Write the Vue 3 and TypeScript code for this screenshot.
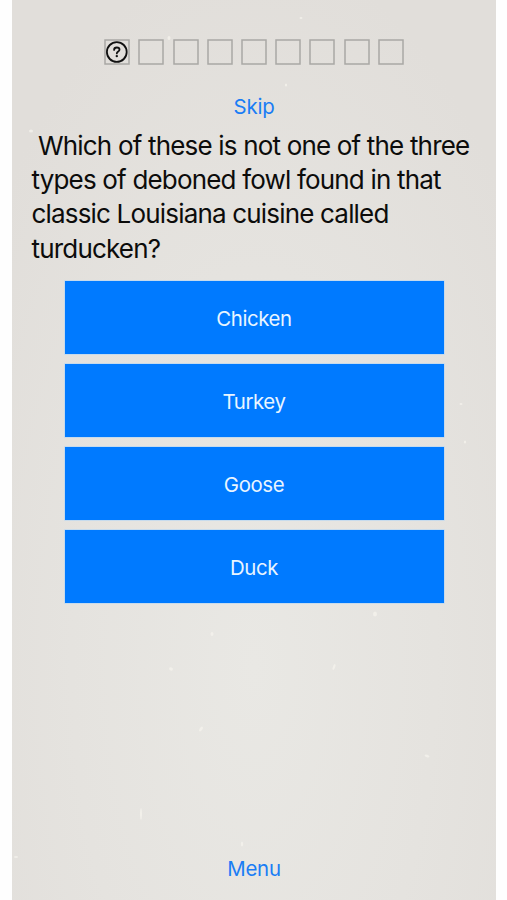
<script setup lang="ts">
import { ref } from 'vue'

interface Speck { x: number; y: number; rx: number; ry: number; tilt: number }

const slots = Array.from({ length: 9 }, (_, i) => i)
const current = ref(0)
const questionLines = [
  '\u00a0Which of these is not one of the three',
  'types of deboned fowl found in that',
  'classic Louisiana cuisine called',
  'turducken?',
]
const answers = ['Chicken', 'Turkey', 'Goose', 'Duck']
const selected = ref<string | null>(null)

// Pale flecks in the paper backdrop
const specks: Speck[] = [
  { x: 157, y: 38, rx: 1.5, ry: 2, tilt: 0 },
  { x: 289, y: 18, rx: 1.5, ry: 1, tilt: 0 },
  { x: 274, y: 85, rx: 1.2, ry: 1.5, tilt: 0 },
  { x: 19, y: 131, rx: 2, ry: 1.5, tilt: 0 },
  { x: 449, y: 404, rx: 1.5, ry: 1, tilt: 0 },
  { x: 453, y: 442, rx: 1.2, ry: 1.5, tilt: 0 },
  { x: 363, y: 614, rx: 2, ry: 2.5, tilt: 0 },
  { x: 200, y: 634, rx: 1.5, ry: 2, tilt: 0 },
  { x: 159, y: 669, rx: 2, ry: 1.5, tilt: 20 },
  { x: 322, y: 667, rx: 1.2, ry: 3.2, tilt: 18 },
  { x: 189, y: 729, rx: 1.4, ry: 2.8, tilt: 35 },
  { x: 415, y: 756, rx: 2.5, ry: 1.2, tilt: 20 },
  { x: 129, y: 814, rx: 1, ry: 6, tilt: 0 },
  { x: 230, y: 844, rx: 1.2, ry: 2.5, tilt: 0 },
  { x: 4, y: 857, rx: 2, ry: 1, tilt: 0 },
]
</script>

<template>
  <main class="screen">
    <svg class="specks" viewBox="0 0 485 900" aria-hidden="true">
      <ellipse
        v-for="(s, i) in specks" :key="i"
        :cx="s.x" :cy="s.y" :rx="s.rx" :ry="s.ry"
        :transform="`rotate(${s.tilt} ${s.x} ${s.y})`"
      />
    </svg>
    <div class="slots">
      <svg v-for="n in slots" :key="n" class="slot" viewBox="0 0 26 26">
        <rect class="frame" x="1" y="1" width="24" height="24" />
        <g v-if="n === current" class="mark">
          <circle cx="12.8" cy="13" r="9.9" />
          <path d="M10.1 10.9C10.1 9.3 11.2 8.5 12.8 8.5C14.4 8.5 15.5 9.4 15.5 10.7C15.5 12.4 12.8 12.5 12.8 14.4" />
          <circle class="dot" cx="12.8" cy="17.1" r="1.2" />
        </g>
      </svg>
    </div>
    <button class="link skip" type="button">Skip</button>
    <p class="question">
      <span v-for="(line, i) in questionLines" :key="i" class="line">{{ line }}</span>
    </p>
    <div class="answers">
      <button v-for="a in answers" :key="a" class="answer" type="button" @click="selected = a">{{ a }}</button>
    </div>
    <button class="link menu" type="button">Menu</button>
  </main>
</template>

<style>
body {
  background: #fefefe;
}
</style>

<style scoped>
.screen {
  position: relative;
  box-sizing: border-box;
  width: 484px;
  height: 900px;
  margin-left: 12px;
  padding-top: 39px;
  display: flex;
  flex-direction: column;
  align-items: center;
  overflow: hidden;
  font-family: Inter, "Liberation Sans", sans-serif;
  background: radial-gradient(ellipse 330px 720px at 50% 74%, #e9e8e4 0%, #e5e3df 55%, #e1deda 100%);
}
.specks {
  position: absolute;
  inset: 0;
  width: 485px;
  height: 900px;
  fill: #f6f4ee;
  opacity: 0.75;
  pointer-events: none;
}
.slots {
  display: flex;
  gap: 8.2px;
}
.slot {
  display: block;
  width: 26px;
  height: 26px;
}
.frame {
  fill: none;
  stroke: #a9a8a5;
  stroke-width: 1.5;
}
.mark {
  fill: none;
  stroke: #111;
  stroke-width: 1.8;
  stroke-linecap: round;
}
.mark .dot {
  fill: #111;
  stroke: none;
}
.link,
.answer {
  border: 0;
  padding: 0;
  font-family: inherit;
  font-size: 20.4px;
  letter-spacing: -0.4px;
  cursor: pointer;
}
.link {
  background: none;
  color: #1a7df5;
  line-height: 26px;
}
.skip {
  margin-top: 29px;
  letter-spacing: -0.2px;
}
.question {
  align-self: stretch;
  margin: 9px 0 0 19.5px;
  font-size: 26px;
  line-height: 34.2px;
  letter-spacing: -0.82px;
  color: #0c0c0b;
}
.line {
  display: block;
  white-space: nowrap;
}
.answers {
  position: relative;
  display: flex;
  flex-direction: column;
  gap: 10px;
  margin-top: 15.2px;
}
.answer {
  width: 379px;
  height: 73px;
  padding-top: 2px;
  background: #007aff;
  color: #e9f5ff;
  box-shadow: 0 0 0 0.7px #b9d7f2;
}
.menu {
  margin-top: auto;
  margin-bottom: 18px;
  letter-spacing: -0.2px;
}
</style>
